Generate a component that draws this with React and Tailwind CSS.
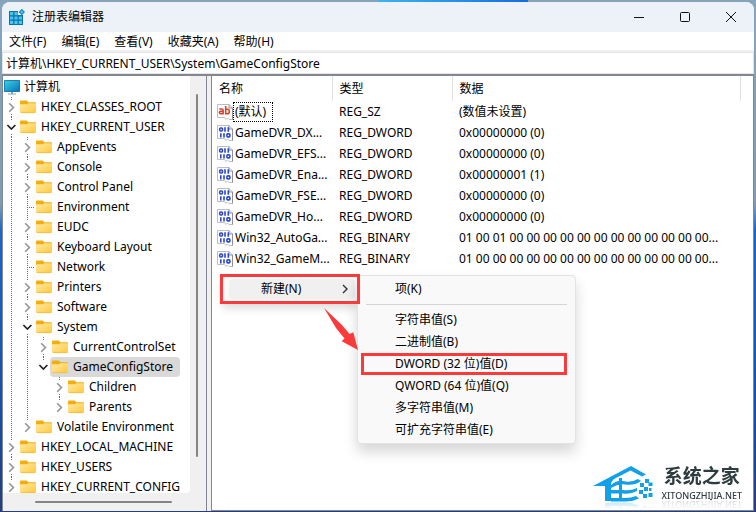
import React from "react";

const TREE = [
  { d: 1, t: "HKEY_CLASSES_ROOT", s: "closed" },
  { d: 1, t: "HKEY_CURRENT_USER", s: "open" },
  { d: 2, t: "AppEvents", s: "closed", g: [1] },
  { d: 2, t: "Console", s: "closed", g: [1] },
  { d: 2, t: "Control Panel", s: "closed", g: [1] },
  { d: 2, t: "Environment", s: "leaf", g: [1] },
  { d: 2, t: "EUDC", s: "closed", g: [1] },
  { d: 2, t: "Keyboard Layout", s: "closed", g: [1] },
  { d: 2, t: "Network", s: "leaf", g: [1] },
  { d: 2, t: "Printers", s: "closed", g: [1] },
  { d: 2, t: "Software", s: "closed", g: [1] },
  { d: 2, t: "System", s: "open", g: [1] },
  { d: 3, t: "CurrentControlSet", s: "closed", g: [1, 1] },
  { d: 3, t: "GameConfigStore", s: "open", g: [1, 1], last: true, selected: true },
  { d: 4, t: "Children", s: "closed", g: [1, 1, 0] },
  { d: 4, t: "Parents", s: "closed", g: [1, 1, 0], last: true },
  { d: 2, t: "Volatile Environment", s: "closed", g: [1], last: true },
  { d: 1, t: "HKEY_LOCAL_MACHINE", s: "closed" },
  { d: 1, t: "HKEY_USERS", s: "closed" },
  { d: 1, t: "HKEY_CURRENT_CONFIG", s: "closed", last: true },
];

const VALUES = [
  ["(默认)", "REG_SZ", "(数值未设置)"],
  ["GameDVR_DX...", "REG_DWORD", "0x00000000 (0)"],
  ["GameDVR_EFS...", "REG_DWORD", "0x00000000 (0)"],
  ["GameDVR_Ena...", "REG_DWORD", "0x00000001 (1)"],
  ["GameDVR_FSE...", "REG_DWORD", "0x00000000 (0)"],
  ["GameDVR_Ho...", "REG_DWORD", "0x00000000 (0)"],
  ["Win32_AutoGa...", "REG_BINARY", "01 00 01 00 00 00 00 00 00 00 00 00 00 00 00..."],
  ["Win32_GameM...", "REG_BINARY", "01 00 00 00 00 00 00 00 00 00 00 00 00 00 00..."],
];

const MENUS = ["文件(F)", "编辑(E)", "查看(V)", "收藏夹(A)", "帮助(H)"];
const NEW_ITEMS = ["字符串值(S)", "二进制值(B)", "DWORD (32 位)值(D)", "QWORD (64 位)值(Q)", "多字符串值(M)", "可扩充字符串值(E)"];

function Dots({ y1, y2 }) {
  return <path d={`M7.5 ${y1}V${y2}`} stroke="#6b6b6b" strokeDasharray="1 1" shapeRendering="crispEdges" />;
}

function Guide({ on }) {
  return (
    <svg width="16" height="20" className="shrink-0">
      {on ? <Dots y1={0} y2={20} /> : null}
    </svg>
  );
}

function Toggle({ state, last }) {
  return (
    <svg width="16" height="20" className="shrink-0" fill="none">
      {state === "leaf" ? (
        <>
          <Dots y1={0} y2={20} />
          <path d="M7 10.5H15" stroke="#6b6b6b" strokeDasharray="1 1" shapeRendering="crispEdges" />
        </>
      ) : (
        <>
          <Dots y1={0} y2={3} />
          {last ? null : <Dots y1={17} y2={20} />}
        </>
      )}
      {state === "closed" && <path d="M5.2 6.3L9.4 10.5L5.2 14.7" stroke="#949494" strokeWidth="1.6" />}
      {state === "open" && <path d="M3.4 8L7.4 12L11.4 8" stroke="#262626" strokeWidth="1.7" />}
    </svg>
  );
}

function Folder() {
  return (
    <svg width="16" height="16" viewBox="0 0 16 16" className="shrink-0">
      <defs>
        <linearGradient id="folder" x1="0" y1="0" x2="1" y2="1">
          <stop offset="0" stopColor="#ffe9a6" />
          <stop offset="1" stopColor="#ffca3a" />
        </linearGradient>
      </defs>
      <path d="M0 2.6Q0 1.6 1 1.6H6.2Q7 1.6 7.6 2.3L8.5 3.2H15Q16 3.2 16 4.2V8H0Z" fill="#f4ae0b" />
      <path d="M0 5.8Q0 5.2 .7 5.2H7L8.4 4.2H15.2Q16 4.2 16 5V13Q16 14 15 14H1Q0 14 0 13Z" fill="url(#folder)" />
      <path d="M1 13.6H15" stroke="#f0bb3a" strokeWidth=".8" />
    </svg>
  );
}

function RegeditIcon() {
  return (
    <svg width="16" height="16" viewBox="0 0 16 16">
      <path d="M0 2H9V6H14V16H0Z" fill="#0b72ad" />
      <path d="M1 3H4.2V6.2H1ZM5.4 3H8.6V6.2H5.4ZM1 7.4H4.2V10.6H1ZM5.4 7.4H8.6V10.6H5.4ZM9.8 7.4H13V10.6H9.8ZM1 11.8H4.2V15H1ZM5.4 11.8H8.6V15H5.4ZM9.8 11.8H13V15H9.8Z" fill="#4cc4f0" />
      <path d="M12.8 -.2L16 3L12.8 6.2L9.6 3Z" fill="#1787c0" />
      <path d="M12.8 1.4L14.4 3L12.8 4.6L11.2 3Z" fill="#52c8f2" />
    </svg>
  );
}

function Monitor() {
  return (
    <svg width="16" height="16" viewBox="0 0 16 16" className="shrink-0">
      <defs>
        <linearGradient id="screen" x1="0" y1="0" x2="1" y2="1">
          <stop offset="0" stopColor="#35d3dc" />
          <stop offset="1" stopColor="#0c72c2" />
        </linearGradient>
      </defs>
      <rect x="0" y="1" width="16" height="12" rx="1" fill="#1173a8" />
      <rect x=".8" y="1.8" width="14.4" height="10.4" fill="url(#screen)" />
      <path d="M7 13H9V14.6H12V15.6H4V14.6H7Z" fill="#8ba0ad" />
    </svg>
  );
}

function ValueIcon({ text }) {
  return (
    <svg width="16" height="16" viewBox="0 0 16 16" className="shrink-0">
      <path d="M.5 .5H12L15.5 4V15.5H12L10.5 14L9 15.5L7.5 13.5H.5Z" fill="#fff" stroke="#bdbdbd" />
      <path d="M12 .5V4H15.5V15.5" fill="none" stroke="#8f8f8f" />
      {text ? (
        <g fill="none" stroke="#d2452a" strokeWidth="1.6">
          <path d="M2.2 5H4.8Q6.1 5 6.1 6.2V10.4M6.1 7.4H3.6Q2.4 7.4 2.4 8.6Q2.4 9.7 3.6 9.7H6.1" />
          <path d="M8.7 2V10.4M8.7 5.2H10.7Q12.3 5.2 12.3 7.4Q12.3 9.7 10.7 9.7H8.7" />
        </g>
      ) : (
        <g fill="none" stroke="#2a45d0" strokeWidth="1.6">
          <rect x="2.7" y="3" width="2.8" height="3" rx="1" />
          <path d="M8 2.3V6.7M11.3 2.3V6.7M3.8 8.2V12.6M7 8.2V12.6" />
          <rect x="9.9" y="8.9" width="3" height="3" rx="1" />
        </g>
      )}
    </svg>
  );
}

function CaptionButton({ label, children }) {
  return (
    <button type="button" aria-label={label} className="flex h-7 w-[46px] items-center justify-center">
      <svg width="12" height="12" viewBox="0 0 12 12" fill="none" stroke="#111">{children}</svg>
    </button>
  );
}

function TreePane() {
  return (
    <nav aria-label="注册表项" className="flex w-[205px] shrink-0 flex-col border-x border-[#828790] bg-[#f0f0f0]">
      <div className="flex min-h-0 flex-1">
        <ul className="min-w-0 flex-1 overflow-hidden rounded-br bg-white pt-px">
          <li className="flex h-5 items-center gap-1 pl-px">
            <Monitor />
            <button type="button">计算机</button>
          </li>
          {TREE.map((n) => (
            <li key={n.t} className="flex h-5 items-center whitespace-nowrap pl-px">
              {(n.g || []).map((on, i) => <Guide key={i} on={on} />)}
              <Toggle state={n.s} last={n.last} />
              <button type="button" className={n.selected ? "-ml-0.5 flex h-5 items-center gap-1 rounded-sm bg-[#d9d9d9] pr-[7px] pl-0.5" : "flex h-5 items-center gap-1 pr-1"}>
                <Folder />
                <span className="pl-px">{n.t}</span>
              </button>
            </li>
          ))}
        </ul>
        <div className="flex w-4 shrink-0 pt-[18px] pb-9 pl-1.5">
          <div className="w-0.5 rounded bg-[#858585]" />
        </div>
      </div>
      <div className="flex h-[18px] shrink-0 items-center pr-[34px] pl-8">
        <div className="h-0.5 flex-1 rounded bg-[#858585]" />
      </div>
    </nav>
  );
}

function ValueTable() {
  return (
    <table className="w-full table-fixed border-collapse text-left">
      <colgroup>
        <col className="w-[120px]" />
        <col className="w-[120px]" />
        <col />
        <col className="w-[13px]" />
      </colgroup>
      <thead>
        <tr className="h-[25px]">
          {["名称", "类型", "数据"].map((h) => (
            <th key={h} className="border-r border-[#e2e2e2] p-0 pl-[7px] font-normal">{h}</th>
          ))}
          <td />
        </tr>
      </thead>
      <tbody>
        {VALUES.map(([name, type, data], i) => (
          <tr key={name} className="h-[21px] whitespace-nowrap">
            <td className="p-0 pl-[5px]">
              <span className="flex items-center">
                <ValueIcon text={i === 0} />
                <span className={i === 0 ? "border border-dotted border-black pr-1.5 pl-px leading-[18px]" : "pl-0.5"}>{name}</span>
              </span>
            </td>
            <td className="p-0 pl-[7px]">{type}</td>
            <td className="p-0 pl-[7px]">{data}</td>
            <td />
          </tr>
        ))}
      </tbody>
    </table>
  );
}

function ContextMenu() {
  return (
    <>
      <div role="menu" className="absolute top-[276px] left-[222px] w-[136px] rounded bg-[#f9f9f9] py-[3px] shadow-[0_6px_10px_rgba(0,0,0,0.15)]">
        <button type="button" role="menuitem" className="ml-[7px] flex h-5 w-[126px] items-center justify-between rounded bg-[#f0f0f0] pr-1.5 pl-8">
          <span>新建(N)</span>
          <svg width="8" height="10" fill="none" stroke="#333" strokeWidth="1.4"><path d="M2 1L6 5L2 9" /></svg>
        </button>
      </div>
      <div role="menu" className="absolute top-[275px] left-[357px] flex w-[219px] flex-col rounded border border-[#e3e3e3] bg-[#f9f9f9] pt-0.5 pb-0.5 shadow-[0_8px_14px_rgba(0,0,0,0.16)]">
        <button type="button" role="menuitem" className="h-[22px] pl-[37px] text-left">项(K)</button>
        <hr className="mx-2 mt-1 mb-1 border-[#d6d6d6]" />
        {NEW_ITEMS.map((t, i) => (
          <button key={t} type="button" role="menuitem" className={i === 2 ? "mr-2 ml-[3px] h-[22px] border-[3px] border-[#fb3b3b] pl-[31px] text-left leading-4" : "h-[22px] pl-[37px] text-left"}>{t}</button>
        ))}
      </div>
      <div aria-hidden="true" className="pointer-events-none absolute top-[274px] left-[220px] h-[30px] w-[140px] border-[3px] border-[#fb3b3b]" />
      <svg className="absolute top-[300px] left-[315px]" width="50" height="55">
        <path d="M9 8L27 25L34.5 34L38.3 32.3L43 50L26.7 41.3L29.5 38.5L21 28Z" fill="#fb3b3b" />
      </svg>
    </>
  );
}

function Watermark() {
  return (
    <div className="absolute right-3.5 bottom-2.5 flex items-end gap-2">
      <svg width="61" height="36" viewBox="0 0 61 36" className="[-webkit-box-reflect:below_0px_linear-gradient(transparent_80%,rgba(0,0,0,0.25))]">
        <g fill="#12a0e9">
          <path d="M0 20L38 0L53 8.5L49 10.5L37.5 4.6L22 12.5Q18 14.5 18 19V35H12V20Z" />
          <path d="M18 19Q24 14 30 15Q38 17 45 13L48 15Q41 20 32 18.5Q25 17.5 18 22Z" />
          <path d="M18 24H30Q38 25 44 22V25Q38 28.5 30 27.5H18Z" />
          <path d="M18 32H32Q38 32 43 30L46 32.5Q40 35.5 33 35.5H18Z" />
          <path d="M26 12H29V35H26Z" />
          <path d="M47 17H51V21H47ZM52 13H56V17H52ZM55.5 16.5H59.5V20H55.5ZM46 24H50V28H46ZM51 21H55V25H51ZM56 22H58.5V25H56ZM50 28H54V32H50ZM55.5 27H59.5V31H55.5Z" />
        </g>
      </svg>
      <div className="flex flex-col items-center text-[#2f3c3f] [-webkit-box-reflect:below_-4px_linear-gradient(transparent_70%,rgba(0,0,0,0.25))]">
        <span className="text-[19px] leading-7 font-bold">系统之家</span>
        <span className="text-[9px] leading-3 font-medium">XITONGZHIJIA.NET</span>
      </div>
    </div>
  );
}

export default function App() {
  return (
    <div className="relative h-screen overflow-hidden bg-[linear-gradient(to_bottom,#86a5bd_0%,#7b9bb8_40%,#1767cf_45%,#134fb0_80%,#253f7a_100%)] px-0.5 pt-0.5 pb-px font-['Noto_Sans','Noto_Sans_CJK_SC',sans-serif] text-[12px] leading-4 text-black">
      <div className="absolute top-0 left-1/2 h-0.5 w-[150px] bg-linear-to-r from-[#3fb4ea] to-[#1a6be0]" />
      <div className="flex h-full flex-col overflow-hidden rounded-t-lg bg-[#f0f0f0]">
        <header className="flex h-[30px] shrink-0 items-center bg-[#edf2f8] pl-[7px]">
          <RegeditIcon />
          <h1 className="flex-1 pl-[7px]">注册表编辑器</h1>
          <CaptionButton label="最小化"><path d="M1 6.5H11" /></CaptionButton>
          <CaptionButton label="最大化"><rect x="1.5" y="1.5" width="9" height="9" rx="1" /></CaptionButton>
          <CaptionButton label="关闭"><path d="M1 1L11 11M11 1L1 11" /></CaptionButton>
        </header>
        <div role="menubar" className="flex h-[18px] shrink-0 items-end gap-[15px] bg-white pl-[7px]">
          {MENUS.map((m) => <button key={m} type="button" role="menuitem">{m}</button>)}
        </div>
        <input aria-label="地址" readOnly value="计算机\HKEY_CURRENT_USER\System\GameConfigStore" className="mt-0.5 h-[22px] shrink-0 border border-[#e4e4e4] bg-white pl-[3px] outline-none" />
        <main className="flex min-h-0 flex-1 border-t-2 border-[#828790]">
          <TreePane />
          <section className="ml-1 min-w-0 flex-1 border-x border-b border-[#828790] bg-white">
            <ValueTable />
          </section>
        </main>
      </div>
      <ContextMenu />
      <Watermark />
    </div>
  );
}
